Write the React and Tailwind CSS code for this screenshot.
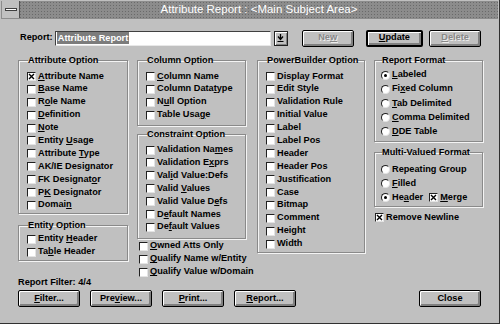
import React from 'react'

const attrs = [
  ['Attribute Name', 0, true],
  ['Base Name', 0],
  ['Role Name', 1],
  ['Definition', 0],
  ['Note', 0],
  ['Entity Usage', 7],
  ['Attribute Type', 10],
  ['AK/IE Designator', -1],
  ['FK Designator', 11],
  ['PK Designator', 1],
  ['Domain', 5],
]

const columns = [
  ['Column Name', 0],
  ['Column Datatype', 11],
  ['Null Option', 1],
  ['Table Usage', 9],
]

const constraints = [
  ['Validation Names', 13],
  ['Validation Exprs', 12],
  ['Valid Value:Defs', 3],
  ['Valid Values', 6],
  ['Valid Value Defs', 13],
  ['Default Names', 1],
  ['Default Values', 2],
]

const pbOptions = [
  'Display Format',
  'Edit Style',
  'Validation Rule',
  'Initial Value',
  'Label',
  'Label Pos',
  'Header',
  'Header Pos',
  'Justification',
  'Case',
  'Bitmap',
  'Comment',
  'Height',
  'Width',
]

const formats = [
  ['Labeled', 0, true],
  ['Fixed Column', 2],
  ['Tab Delimited', 0],
  ['Comma Delimited', 0],
  ['DDE Table', 0],
]

function Mn({ t, u = -1 }) {
  if (u < 0) return <span className="whitespace-nowrap">{t}</span>
  return (
    <span className="whitespace-nowrap">
      {t.slice(0, u)}
      <span className="underline underline-offset-[1px]">{t[u]}</span>
      {t.slice(u + 1)}
    </span>
  )
}

function Box({ checked }) {
  return (
    <span className="flex h-[9px] w-[9px] shrink-0 items-center justify-center border border-t-[#202020] border-l-[#202020] border-r-[#e4e4e4] border-b-[#e4e4e4] bg-white">
      {checked && (
        <svg width="7" height="7" viewBox="0 0 7 7">
          <path d="M1 1L6 6M6 1L1 6" stroke="#000" strokeWidth="1.4" />
        </svg>
      )}
    </span>
  )
}

function Check({ label, u, checked, h = 'h-[12.9px]' }) {
  return (
    <div className={`flex items-center gap-[2px] ${h}`}>
      <Box checked={checked} />
      <Mn t={label} u={u} />
    </div>
  )
}

function Radio({ label, u, on, h = 'h-[14.2px]' }) {
  return (
    <div className={`flex items-center gap-[2px] ${h}`}>
      <span className="flex h-[9px] w-[9px] shrink-0 items-center justify-center rounded-full border border-t-[#202020] border-l-[#202020] border-r-[#e4e4e4] border-b-[#e4e4e4] bg-white">
        {on && <span className="h-[3px] w-[3px] rounded-full bg-black" />}
      </span>
      <Mn t={label} u={u} />
    </div>
  )
}

function Group({ title, className = '', children }) {
  return (
    <fieldset
      className={`border border-[#8a8a8a] shadow-[1px_1px_0_#f4f4f4,inset_1px_1px_0_#f4f4f4] ${className}`}
    >
      <legend className="ml-[1px] px-0 leading-[11px] whitespace-nowrap">{title}</legend>
      {children}
    </fieldset>
  )
}

function Button({ children, className = '', disabled, def }) {
  return (
    <button
      className={`flex items-center justify-center rounded-[2px] bg-[#c0c0c0] font-bold ${
        def ? 'border-2' : 'border'
      } border-black shadow-[inset_1px_1px_0_#fff,inset_-2px_-2px_0_#808080] ${
        disabled ? 'text-[#888] [text-shadow:1px_1px_0_#eee]' : 'text-black'
      } ${className}`}
    >
      {children}
    </button>
  )
}

export default function App() {
  return (
    <div className="h-[324px] w-[500px] overflow-hidden border-r border-b border-[#303030] bg-[#c0c0c0] font-['Liberation_Sans',Arial,sans-serif] text-[9.2px] font-bold text-black">
      {/* title bar */}
      <div className="mx-[1px] mt-[1px] flex h-[18px] bg-[#8c8c8c] bg-[radial-gradient(circle,#6a6a6a_0.7px,transparent_0.9px)] bg-[length:3px_3px]">
        <div className="ml-[1px] flex h-[17px] w-[18px] items-center justify-center border-r border-[#505050] bg-[#c0c0c0]">
          <span className="h-[3px] w-[12px] border border-[#404040] bg-white" />
        </div>
        <div className="flex flex-1 items-center justify-center text-[11.5px] font-normal text-white">
          Attribute Report : &lt;Main Subject Area&gt;
        </div>
      </div>

      <div className="px-[18px]">
        {/* report row */}
        <div className="mt-[10px] flex h-[18px] items-center">
          <span className="ml-[2px] w-[35px]">Report:</span>
          <div className="flex h-[15px] w-[217px] items-center border border-t-[#404040] border-l-[#404040] border-r-[#e8e8e8] border-b-[#e8e8e8] bg-white pl-[1px]">
            <span className="bg-[#7c7c7c] px-[1px] leading-[12px] text-white">Attribute Report</span>
          </div>
          <button className="ml-[3px] flex h-[15px] w-[14px] items-center justify-center border border-[#202020] bg-[#c0c0c0] shadow-[inset_1px_1px_0_#fff,inset_-1px_-1px_0_#808080]">
            <svg width="7" height="8" viewBox="0 0 7 8">
              <path d="M3.5 0V4.5M1 2.5L3.5 5.5L6 2.5" stroke="#000" strokeWidth="1.3" fill="none" />
              <path d="M0.5 7.5H6.5" stroke="#000" strokeWidth="1" />
            </svg>
          </button>
          <Button disabled className="ml-[14px] h-[17px] w-[52px]">
            <Mn t="New" u={2} />
          </Button>
          <Button def className="ml-[12px] h-[17px] w-[58px]">
            <Mn t="Update" u={0} />
          </Button>
          <Button disabled className="ml-[6px] h-[17px] w-[52px]">
            <Mn t="Delete" u={0} />
          </Button>
        </div>

        {/* columns */}
        <div className="mt-[8px] flex h-[222px] items-start">
          <div className="flex w-[110px] shrink-0 flex-col">
            <Group title="Attribute Option" className="pt-[4px] pb-[1px] pl-[8px]">
              {attrs.map(([t, u, c]) => (
                <Check key={t} label={t} u={u} checked={c} />
              ))}
            </Group>
            <Group title="Entity Option" className="mt-[6px] pt-[2px] pb-[1px] pl-[8px]">
              <Check label="Entity Header" u={7} h="h-[13px]" />
              <Check label="Table Header" u={2} h="h-[13px]" />
            </Group>
          </div>

          <div className="ml-[9px] flex w-[109px] shrink-0 flex-col">
            <Group title="Column Option" className="pt-[4px] pb-[3px] pl-[8px]">
              {columns.map(([t, u]) => (
                <Check key={t} label={t} u={u} />
              ))}
            </Group>
            <Group title="Constraint Option" className="mt-[3px] pt-[4px] pb-[4px] pl-[8px]">
              {constraints.map(([t, u]) => (
                <Check key={t} label={t} u={u} />
              ))}
            </Group>
            <div className="mt-[1px] pl-[2px]">
              <Check label="Owned Atts Only" u={0} h="h-[13px]" />
              <Check label="Qualify Name w/Entity" u={0} h="h-[13px]" />
              <Check label="Qualify Value w/Domain" u={0} h="h-[13px]" />
            </div>
          </div>

          <div className="ml-[11px] flex w-[108px] shrink-0 flex-col">
            <Group title="PowerBuilder Option" className="pt-[4px] pb-[2px] pl-[8px]">
              {pbOptions.map((t) => (
                <Check key={t} label={t} />
              ))}
            </Group>
          </div>

          <div className="ml-[9px] flex w-[109px] shrink-0 flex-col">
            <Group title="Report Format" className="pt-[2px] pb-[2px] pl-[6px]">
              {formats.map(([t, u, on]) => (
                <Radio key={t} label={t} u={u} on={on} />
              ))}
            </Group>
            <Group title="Multi-Valued Format" className="mt-[5px] pt-[5px] pb-[2px] pl-[6px]">
              <Radio label="Repeating Group" h="h-[13.8px]" />
              <Radio label="Filled" u={0} h="h-[13.8px]" />
              <div className="flex h-[13.8px] items-center">
                <Radio label="Header" u={2} on h="h-[13.8px]" />
                <div className="ml-[6px]">
                  <Check label="Merge" u={0} checked h="h-[13.8px]" />
                </div>
              </div>
            </Group>
            <div className="mt-[4px] pl-[1px]">
              <Check label="Remove Newline" checked h="h-[13px]" />
            </div>
          </div>
        </div>

        <div className="leading-[11px]">Report Filter: 4/4</div>

        {/* bottom buttons */}
        <div className="mt-[2px] flex h-[17px]">
          <Button className="w-[62px]">
            <Mn t="Filter..." u={0} />
          </Button>
          <Button className="ml-[10px] w-[62px]">
            <Mn t="Preview..." u={3} />
          </Button>
          <Button className="ml-[10px] w-[62px]">
            <Mn t="Print..." u={0} />
          </Button>
          <Button className="ml-[10px] w-[62px]">
            <Mn t="Report..." u={0} />
          </Button>
          <Button className="ml-auto w-[62px]">Close</Button>
        </div>
      </div>
    </div>
  )
}
